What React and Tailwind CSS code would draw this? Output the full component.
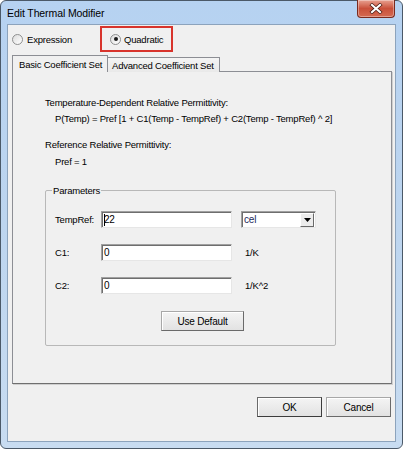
import React from "react";

const Radio = ({ checked }) => (
    <span className="w-[11px] h-[11px] rounded-full border border-[#8e8f8f] bg-gradient-to-br from-[#dcdcdc] to-[#ffffff] flex items-center justify-center shrink-0">
        {checked && <span className="w-[4px] h-[4px] rounded-full bg-[#1b1b1b]" />}
    </span>
);

const TextBox = ({ value, caret }) => (
    <div className="w-[131px] h-[17px] bg-white border border-t-[#a0a0a0] border-l-[#a0a0a0] border-r-[#e6e6e6] border-b-[#e6e6e6] shadow-[inset_1px_1px_0_#6e6e6e] flex items-center pl-[2px]">
        <span className="relative text-[10px] leading-[12px] text-black">
            {caret && <span className="absolute left-[0px] top-[0px] w-[1px] h-[12px] bg-black" />}
            {value}
        </span>
    </div>
);

const WinButton = ({ children, isDefault, className = "" }) => (
    <div
        className={
            "h-[20px] flex items-center justify-center text-[10px] text-black bg-gradient-to-b from-[#f4f4f4] to-[#e2e2e2] border shadow-[inset_1px_1px_0_#ffffff] " +
            (isDefault
                ? "border-[#6a6a6a] border-b-[#3c3c3c] border-r-[#3c3c3c] "
                : "border-[#a8a8a8] border-b-[#6a6a6a] border-r-[#6a6a6a] ") +
            className
        }
    >
        {children}
    </div>
);

const CloseButton = () => (
    <div className="-mt-[1px] mr-[1px] w-[38px] h-[18px] rounded-b-[4px] border border-t-0 border-[#7a2a1e] bg-gradient-to-b from-[#e7a090] via-[#c9503a] to-[#d46a52] flex items-center justify-center shadow-[inset_0_0_0_1px_rgba(255,255,255,0.35)]">
        <svg width="14" height="11" viewBox="0 0 14 11">
            <path d="M3 2 L11 9 M11 2 L3 9" stroke="#4a1a12" strokeWidth="3.6" strokeLinecap="square" />
            <path d="M3 2 L11 9 M11 2 L3 9" stroke="#ffffff" strokeWidth="2.2" strokeLinecap="square" />
        </svg>
    </div>
);

export default function App() {
    const rows = [
        { label: "TempRef:", value: "22", caret: true, dropdown: true },
        { label: "C1:", value: "0", unit: "1/K" },
        { label: "C2:", value: "0", unit: "1/K^2" },
    ];

    return (
        <div className="w-[403px] h-[449px] bg-white font-['Liberation_Sans',Arial,sans-serif] text-black">
            <div className="w-full h-full flex flex-col rounded-[6px] border border-[#4b5968] bg-gradient-to-b from-[#b6d2f1] via-[#bdd5ef] to-[#c8dcf1] px-[6px] pb-[6px]">
                {/* title bar */}
                <div className="h-[23px] flex items-start justify-between">
                    <span className="pl-[0px] pt-[6px] text-[10.5px] leading-[12px] tracking-[-0.1px]">
                        Edit Thermal Modifier
                    </span>
                    <CloseButton />
                </div>

                {/* client area */}
                <div className="flex-1 border border-[#8ca3bc] bg-[#f0f0f0] flex flex-col text-[9.5px] leading-[13px] tracking-[-0.2px]">
                    <div className="mt-[1px] h-[26px] flex items-center">
                        <div className="ml-[4px] w-[88px] flex items-center gap-[4px]">
                            <Radio />
                            <span>Expression</span>
                        </div>
                        <div className="w-[73px] h-[26px] border-2 border-[#d8342c] flex items-center pl-[8px] gap-[3px]">
                            <Radio checked />
                            <span>Quadratic</span>
                        </div>
                    </div>

                    {/* tabs */}
                    <div className="mt-[3px] ml-[4px] h-[17px] flex items-end relative z-10 -mb-[1px]">
                        <div className="h-[17px] w-[96px] bg-[#f0f0f0] border border-b-0 border-[#8c8e94] pl-[6px] pt-[2px]">
                            Basic Coefficient Set
                        </div>
                        <div className="h-[15px] w-[112px] bg-gradient-to-b from-[#f4f4f4] to-[#e9e9e9] border border-l-0 border-b-0 border-[#8c8e94] pl-[4px] pt-[1px]">
                            Advanced Coefficient Set
                        </div>
                    </div>

                    {/* tab panel */}
                    <div className="ml-[4px] w-[380px] h-[313px] border border-[#8c8e94] border-b-[#6f6f6f] shadow-[1px_1px_0_#cfcfcf] pl-[32px] pt-[24px] flex flex-col items-start">
                        <div>Temperature-Dependent Relative Permittivity:</div>
                        <div className="mt-[3px] ml-[10px]">
                            P(Temp) = Pref [1 + C1(Temp - TempRef) + C2(Temp - TempRef) ^ 2]
                        </div>
                        <div className="mt-[13px]">Reference Relative Permittivity:</div>
                        <div className="mt-[4px] ml-[10px]">Pref = 1</div>

                        {/* group box */}
                        <div className="mt-[22px] w-[291px] h-[156px] border border-[#b8b8b8] rounded-[2px] relative flex flex-col pl-[9px] pt-[20px]">
                            <span className="absolute left-[6px] -top-[7px] px-[1px] bg-[#f0f0f0]">Parameters</span>
                            <div className="flex flex-col gap-[16px]">
                                {rows.map((row) => (
                                    <div key={row.label} className="flex items-center h-[17px]">
                                        <span className="w-[46px]">{row.label}</span>
                                        <TextBox value={row.value} caret={row.caret} />
                                        {row.dropdown && (
                                            <div className="ml-[9px] w-[75px] h-[17px] bg-white border border-t-[#a0a0a0] border-l-[#a0a0a0] border-r-[#e6e6e6] border-b-[#e6e6e6] shadow-[inset_1px_1px_0_#6e6e6e] flex items-center justify-between pl-[2px] pr-[1px]">
                                                <span className="text-[10px] leading-[12px] text-[#1c2a5a]">cel</span>
                                                <div className="w-[14px] h-[14px] mt-[1px] bg-[#ececec] border border-t-[#ffffff] border-l-[#ffffff] border-r-[#6a6a6a] border-b-[#6a6a6a] flex items-center justify-center">
                                                    <svg width="7" height="4" viewBox="0 0 7 4">
                                                        <path d="M0 0 H7 L3.5 4 Z" fill="#000" />
                                                    </svg>
                                                </div>
                                            </div>
                                        )}
                                        {row.unit && <span className="ml-[13px]">{row.unit}</span>}
                                    </div>
                                ))}
                            </div>
                            <WinButton className="mt-[17px] ml-[106px] w-[83px]">Use Default</WinButton>
                        </div>
                    </div>

                    {/* dialog buttons */}
                    <div className="mt-[13px] flex justify-end gap-[4px] pr-[4px]">
                        <WinButton isDefault className="w-[65px]">OK</WinButton>
                        <WinButton className="w-[65px]">Cancel</WinButton>
                    </div>
                </div>
            </div>
        </div>
    );
}
